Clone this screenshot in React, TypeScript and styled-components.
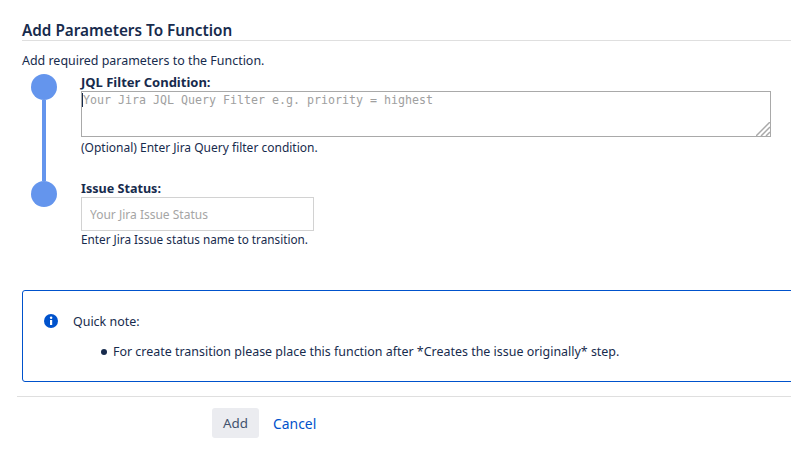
import React from 'react';
import styled, { createGlobalStyle } from 'styled-components';

const GlobalStyle = createGlobalStyle`
  html, body {
    margin: 0;
    padding: 0;
    background: #fff;
    overflow: hidden;
  }
  body {
    font-family: "Noto Sans", "Open Sans", sans-serif;
    font-size: 12.45px;
    color: #172b4d;
  }
`;

const Page = styled.div`
  width: 791px;
  height: 456px;
  overflow: hidden;
  box-sizing: border-box;
  padding: 20px 0 0 22px;
`;

const Title = styled.h2`
  margin: 0;
  font-size: 15.3px;
  line-height: 20px;
  font-weight: 600;
  height: 20px;
  border-bottom: 1px solid #dfdfdf;
`;

const Description = styled.p`
  margin: 11px 0 0;
  line-height: 17px;
  height: 17px;
`;

const Steps = styled.div`
  margin-top: 5px;
  padding-left: 9px;
`;

const Step = styled.div<{ $height: number }>`
  display: flex;
  gap: 24px;
  height: ${props => props.$height}px;
`;

const Marker = styled.div`
  width: 26px;
  display: flex;
  flex-direction: column;
  align-items: center;
`;

const Dot = styled.div`
  width: 26px;
  height: 26px;
  border-radius: 50%;
  background: #6495ed;
  flex: none;
`;

const Connector = styled.div`
  width: 4px;
  flex: 1;
  background: #6495ed;
`;

const Field = styled.div`
  width: 690px;
`;

const Label = styled.label<{ $size: number; $height: number }>`
  display: block;
  font-size: ${props => props.$size}px;
  font-weight: 700;
  line-height: 16px;
  height: ${props => props.$height}px;
`;

const TextAreaWrap = styled.div`
  position: relative;
  width: 690px;
  height: 46px;
`;

const TextArea = styled.textarea`
  display: block;
  box-sizing: border-box;
  width: 690px;
  height: 46px;
  margin: 0;
  padding: 1px 1px;
  border: 1px solid #a9a9a9;
  border-radius: 0;
  outline: none;
  resize: none;
  font-family: "DejaVu Sans Mono", monospace;
  font-size: 11.63px;
  line-height: 14px;
  &::placeholder {
    color: #a0a0a0;
    opacity: 1;
  }
`;

const Caret = styled.span`
  position: absolute;
  left: 1px;
  top: 2px;
  width: 1px;
  height: 14px;
  background: #172b4d;
`;

const ResizeGrip = styled.svg`
  position: absolute;
  right: 1px;
  bottom: 1px;
`;

const TextInput = styled.input`
  display: block;
  box-sizing: border-box;
  width: 233px;
  height: 34px;
  margin: 0;
  padding: 0 8px;
  border: 1px solid #d2d2d2;
  border-radius: 0;
  outline: none;
  font-family: inherit;
  font-size: 12px;
  &::placeholder {
    color: #a5a5a5;
    opacity: 1;
  }
`;

const Help = styled.div<{ $gap: number; $size: number }>`
  margin-top: ${props => props.$gap}px;
  font-size: ${props => props.$size}px;
  line-height: 17px;
`;

const Panel = styled.section`
  box-sizing: border-box;
  width: 800px;
  height: 92px;
  margin-top: 43px;
  padding: 22px 0 0 20px;
  border: 1px solid #0052cc;
  border-radius: 3px;
`;

const PanelHeader = styled.div`
  display: flex;
  align-items: center;
  gap: 14px;
  height: 16px;
`;

const NoteList = styled.ul`
  margin: 14px 0 0;
  padding: 0 0 0 58px;
  list-style: none;
  line-height: 17px;
`;

const NoteItem = styled.li`
  display: flex;
  align-items: center;
  gap: 6px;
  &::before {
    content: '';
    flex: none;
    width: 6px;
    height: 6px;
    border-radius: 50%;
    background: #172b4d;
  }
`;

const Footer = styled.div`
  margin: 14px 0 0 -5px;
  border-top: 1px solid #dfdfdf;
  padding: 11px 0 0 195px;
  display: flex;
  align-items: center;
  gap: 14px;
`;

const AddButton = styled.button`
  box-sizing: border-box;
  width: 47px;
  height: 30px;
  padding: 0;
  border: none;
  border-radius: 3px;
  background: #ebecf0;
  color: #42526e;
  font-family: inherit;
  font-size: 13.4px;
`;

const CancelLink = styled.a`
  color: #0052cc;
  font-size: 13.9px;
  text-decoration: none;
`;

const InfoIcon = () => (
  <svg width="16" height="16" viewBox="0 0 16 16" aria-hidden="true">
    <circle cx="8" cy="8" r="7" fill="#0052cc" />
    <rect x="7" y="7" width="2.2" height="5" fill="#fff" />
    <circle cx="8.1" cy="4.8" r="1.25" fill="#fff" />
  </svg>
);

const App: React.FC = () => (
  <Page>
    <GlobalStyle />
    <Title>Add Parameters To Function</Title>
    <Description>Add required parameters to the Function.</Description>
    <Steps>
      <Step $height={107}>
        <Marker>
          <Dot />
          <Connector />
        </Marker>
        <Field>
          <Label $size={13} $height={17}>JQL Filter Condition:</Label>
          <TextAreaWrap>
            <TextArea placeholder="Your Jira JQL Query Filter e.g. priority = highest" />
            <Caret />
            <ResizeGrip width="14" height="14" viewBox="0 0 14 14" aria-hidden="true">
              <path d="M0 14 L14 0 M5 14 L14 5 M10 14 L14 10" stroke="#a9a9a9" strokeWidth="1.5" fill="none" />
            </ResizeGrip>
          </TextAreaWrap>
          <Help $gap={2} $size={12}>(Optional) Enter Jira Query filter condition.</Help>
        </Field>
      </Step>
      <Step $height={66}>
        <Marker>
          <Dot />
        </Marker>
        <Field>
          <Label $size={12.6} $height={16}>Issue Status:</Label>
          <TextInput placeholder="Your Jira Issue Status" />
          <Help $gap={0} $size={11.75}>Enter Jira Issue status name to transition.</Help>
        </Field>
      </Step>
    </Steps>
    <Panel>
      <PanelHeader>
        <InfoIcon />
        <span>Quick note:</span>
      </PanelHeader>
      <NoteList>
        <NoteItem>For create transition please place this function after *Creates the issue originally* step.</NoteItem>
      </NoteList>
    </Panel>
    <Footer>
      <AddButton type="button">Add</AddButton>
      <CancelLink href="#">Cancel</CancelLink>
    </Footer>
  </Page>
);

export default App;
